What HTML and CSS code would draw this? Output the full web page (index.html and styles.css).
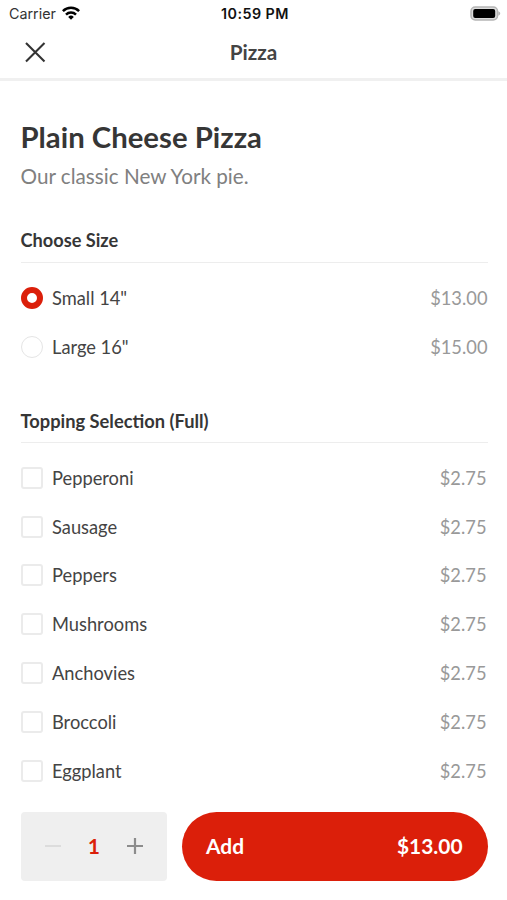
FILE: index.html
```html
<!DOCTYPE html>
<html lang="en">
<head>
<meta charset="utf-8">
<title>Pizza</title>
<link rel="stylesheet" href="styles.css">
</head>
<body>
<div class="status">
  <div class="carrier"><span>Carrier</span>
    <svg width="18" height="14" viewBox="0 0 18 14"><path d="M9 13.7 11.8 10.9a4 4 0 0 0-5.6 0z" fill="#000"/><path d="M4 8.6a7.1 7.1 0 0 1 10 0M.9 5.2a11.5 11.5 0 0 1 16.2 0" fill="none" stroke="#000" stroke-width="2.5"/></svg>
  </div>
  <div class="clock">10:59 PM</div>
  <svg class="battery" width="31" height="15" viewBox="0 0 31 15"><rect x="1" y="1" width="26.5" height="13" rx="4.2" fill="#ddd" stroke="#b5b5b5" stroke-width="1.5"/><rect x="3.2" y="3" width="22" height="9" rx="2"/><path d="M28.3 5.3v4.4c2.6-.8 2.6-3.6 0-4.4z" fill="#b5b5b5"/></svg>
</div>
<header class="nav">
  <svg class="close" width="22" height="22" viewBox="0 0 22 22"><path d="M2 2 20.5 20.5M20.5 2 2 20.5" stroke="#333" stroke-width="2.1"/></svg>
  <h1>Pizza</h1>
</header>
<main>
  <h2 class="title">Plain Cheese Pizza</h2>
  <p class="desc">Our classic New York pie.</p>
  <h3 class="size-title">Choose Size</h3>
  <ul class="sizes">
    <li><i class="radio on"></i><span>Small 14"</span><b>$13.00</b></li>
    <li><i class="radio"></i><span>Large 16"</span><b>$15.00</b></li>
  </ul>
  <h3 class="topping-title">Topping Selection (Full)</h3>
  <ul class="toppings">
    <li><i class="check"></i><span>Pepperoni</span><b>$2.75</b></li>
    <li><i class="check"></i><span>Sausage</span><b>$2.75</b></li>
    <li><i class="check"></i><span>Peppers</span><b>$2.75</b></li>
    <li><i class="check"></i><span>Mushrooms</span><b>$2.75</b></li>
    <li><i class="check"></i><span>Anchovies</span><b>$2.75</b></li>
    <li><i class="check"></i><span>Broccoli</span><b>$2.75</b></li>
    <li><i class="check"></i><span>Eggplant</span><b>$2.75</b></li>
  </ul>
</main>
<footer>
  <div class="stepper">
    <svg width="16" height="16" viewBox="0 0 16 16"><path d="M0 8h16" stroke="#dcdcdc" stroke-width="2"/></svg>
    <span>1</span>
    <svg width="16" height="16" viewBox="0 0 16 16"><path d="M0 8h16M8 0v16" stroke="#8c8c8c" stroke-width="2.2"/></svg>
  </div>
  <button class="add"><span>Add</span><span>$13.00</span></button>
</footer>
</body>
</html>
```
FILE: styles.css
```css
* { box-sizing: border-box; }
body { margin: 0; height: 900px; overflow: hidden; display: flex; flex-direction: column; background: #fff; color: #363636; font-family: Lato, sans-serif; }
h1, h2, h3, p, ul { margin: 0; padding: 0; list-style: none; }
.status { flex: none; height: 26px; padding: 1px 6px 0 9px; display: grid; grid-template-columns: 1fr auto 1fr; align-items: center; font: 14.3px/26px Inter, sans-serif; color: #111; }
.carrier { display: flex; align-items: center; gap: 6px; color: #333; }
.carrier svg { margin-top: -2px; }
.clock { font-weight: 600; letter-spacing: .45px; }
.battery { justify-self: end; margin-top: -1px; }
.nav { flex: none; height: 55px; border-bottom: 3px solid #f0f0f0; display: grid; grid-template-columns: 1fr auto 1fr; align-items: center; padding: 0 24px; }
.nav h1 { font-size: 20.7px; line-height: 26px; font-weight: 700; color: #444; }
main { padding: 0 19.5px 0 20.5px; flex: 1; min-height: 0; }
.title { margin-top: 36px; font-size: 29.3px; line-height: 40px; font-weight: 700; }
.desc { margin-top: 5px; font-size: 20.7px; line-height: 28px; color: #808080; }
h3 { font-size: 18.3px; line-height: 24px; font-weight: 700; border-bottom: 1px solid #ededed; }
.size-title { margin-top: 38px; height: 35px; font-size: 18.2px; }
.sizes { padding-top: 11px; }
.topping-title { margin-top: 37.4px; height: 34px; }
.toppings { padding-top: 10.5px; }
li { display: flex; align-items: center; height: 48.8px; font-size: 18.3px; color: #444; }
li span { flex: 1; margin-left: 9.5px; }
li b { font-weight: 400; color: #999; }
.toppings b { margin-right: 1px; }
.radio, .check { width: 22px; height: 22px; border: 1.5px solid #e5e5e5; border-radius: 50%; }
.check { border-width: 2px; border-color: #ebebeb; border-radius: 3px; }
.radio.on { border: 6px solid #db1f0a; }
footer { flex: none; height: 108px; padding: 20px 19.5px 19.5px 20.5px; display: flex; gap: 15px; }
.stepper { width: 146.5px; background: #efefef; border-radius: 4px; display: flex; align-items: center; justify-content: space-between; padding: 0 24px; font-size: 21px; font-weight: 700; color: #db1f0a; }
.stepper span { margin-top: -1px; }
.add { flex: 1; border: 0; border-radius: 35px; background: #db1f0a; color: #fff; font: 700 20.9px Lato, sans-serif; padding: 0 25px 1px 24px; display: flex; justify-content: space-between; align-items: center; }
```
